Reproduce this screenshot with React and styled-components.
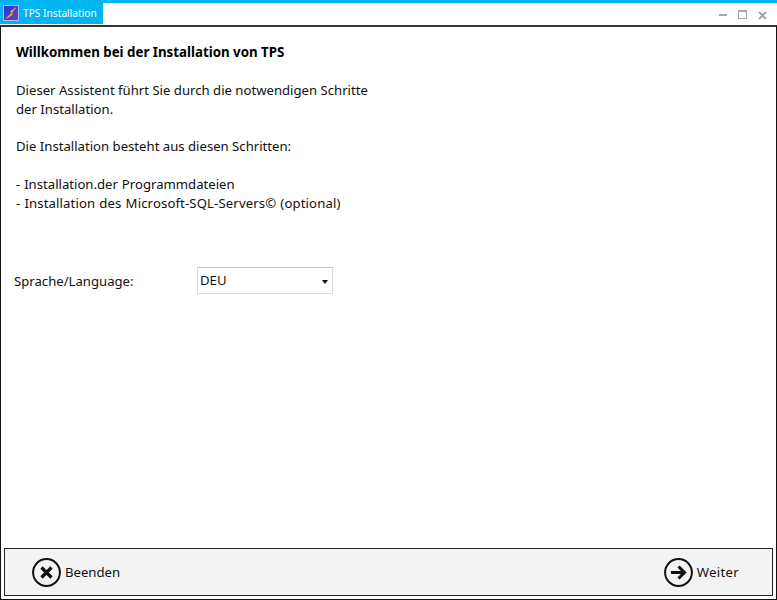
import React from "react";
import styled, { createGlobalStyle } from "styled-components";

const Global = createGlobalStyle`
  html, body { margin: 0; padding: 0; background: #fff; }
  #root { width: 777px; height: 600px; }
`;
const Window = styled.div`
  width: 777px; height: 600px; box-sizing: border-box; display: flex; flex-direction: column;
  font-family: "Noto Sans", "Open Sans", sans-serif; color: #111; background: #fff; overflow: hidden;
`;
const TitleBar = styled.header`
  height: 25px; flex: none; box-sizing: border-box; border-top: 3px solid #00b4f0; display: flex; justify-content: space-between;
`;
const TitleTab = styled.div`
  width: 103px; height: 21px; background: #00b4f0; color: #fff; font-size: 10.2px;
  display: flex; align-items: center; gap: 4px; padding-left: 3px; box-sizing: border-box; padding-bottom: 1px; white-space: nowrap;
`;
const WindowControls = styled.div`
  display: flex; align-items: center; gap: 10px; padding-right: 10px; height: 22px; padding-top: 2px; box-sizing: border-box;
`;
const Body = styled.main`
  flex: 1; min-height: 0; display: flex; flex-direction: column; box-sizing: border-box;
  border: 1px solid #111; border-top: 2px solid #333; padding: 0 3px 3px;
`;
const Content = styled.section`
  flex: 1; padding: 16px 0 0 12px; font-size: 13.15px; line-height: 19px;
`;
const Heading = styled.h1`
  margin: 0 0 19px; font-size: 13.3px; line-height: 19px; font-weight: 700; color: #000;
`;
const Paragraph = styled.p`
  margin: 0 0 18.4px; white-space: pre-line;
`;
const ListLine = styled.span`
  display: block; word-spacing: 0.5px; letter-spacing: ${(p) => p.$spread}px;
`;
const LanguageRow = styled.div`
  display: flex; align-items: center; margin: 54.3px 0 0 -2px;
`;
const LanguageLabel = styled.label`
  width: 183px; flex: none; padding-top: 2px;
`;
const Select = styled.div`
  width: 136px; height: 27px; box-sizing: border-box; border: 1px solid #dcdcdc; border-top-color: #c8c8c8; display: flex; align-items: center;
  justify-content: space-between; padding: 0 4px 0 2px; background: #fff;
`;
const Caret = styled.span`
  width: 0; height: 0; border-left: 3.5px solid transparent; border-right: 3.5px solid transparent; border-top: 4px solid #111; margin-top: 2px;
`;
const Footer = styled.footer`
  height: 48px; flex: none; box-sizing: border-box; border: 1px solid #222; background: #f3f3f3; display: flex; align-items: center; justify-content: space-between;
  padding: 0 33px 0 27px;
`;
const ActionButton = styled.button`
  all: unset; display: flex; align-items: center; gap: 4px; font-family: inherit; font-size: 13.15px; color: #111;
  letter-spacing: ${(p) => p.$spread || 0}px;
`;

const AppIcon = () => (
  <svg width="16" height="16" viewBox="0 0 16 16">
    <defs>
      <linearGradient id="appBg" x1="0" y1="0" x2="1" y2="1">
        <stop offset="0" stopColor="#2a2fd8" />
        <stop offset="1" stopColor="#5a4fc0" />
      </linearGradient>
    </defs>
    <rect x="0.5" y="0.5" width="15" height="15" fill="url(#appBg)" stroke="#b9b6ee" />
    <path d="M13 2.5 L7.5 6.5 L8.5 8 L3 13.5 L6 12 L9.5 9.5 L8.8 8 Z" fill="#f7c21a" stroke="#f59a10" strokeWidth="0.5" />
  </svg>
);
const Minimize = () => <svg width="9" height="10" viewBox="0 0 9 10"><rect x="0" y="4" width="8" height="2" fill="#a8a8a8" /></svg>;
const Maximize = () => <svg width="10" height="10" viewBox="0 0 10 10"><rect x="0.5" y="0.5" width="8" height="8" fill="none" stroke="#a8a8a8" /><rect x="0" y="0" width="9" height="2" fill="#a8a8a8" /></svg>;
const CloseX = () => <svg width="9" height="9" viewBox="0 0 9 9"><path d="M1 1 L8 8 M8 1 L1 8" stroke="#a0a0a0" strokeWidth="1.8" /></svg>;
const CircleIcon = ({ children }) => (
  <svg width="29" height="29" viewBox="0 0 29 29">
    <circle cx="14.5" cy="14.5" r="13.4" fill="none" stroke="#111" strokeWidth="2" />
    {children}
  </svg>
);

export default function App() {
  return (
    <Window>
      <Global />
      <TitleBar>
        <TitleTab><AppIcon />TPS Installation</TitleTab>
        <WindowControls><Minimize /><Maximize /><CloseX /></WindowControls>
      </TitleBar>
      <Body>
        <Content>
          <Heading>Willkommen bei der Installation von TPS</Heading>
          <Paragraph>{"Dieser Assistent führt Sie durch die notwendigen Schritte\nder Installation."}</Paragraph>
          <Paragraph>Die Installation besteht aus diesen Schritten:</Paragraph>
          <Paragraph as="div">
            <ListLine $spread={0}>- Installation.der Programmdateien</ListLine>
            <ListLine $spread={0.13}>- Installation des Microsoft-SQL-Servers© (optional)</ListLine>
          </Paragraph>
          <LanguageRow>
            <LanguageLabel>Sprache/Language:</LanguageLabel>
            <Select>DEU<Caret /></Select>
          </LanguageRow>
        </Content>
        <Footer>
          <ActionButton>
            <CircleIcon><path d="M9.5 9.5 L19.5 19.5 M19.5 9.5 L9.5 19.5" stroke="#111" strokeWidth="3.2" /></CircleIcon>
            Beenden
          </ActionButton>
          <ActionButton $spread={0.3}>
            <CircleIcon><path d="M7 14.5 H20 M14.5 8.5 L20.5 14.5 L14.5 20.5" stroke="#111" strokeWidth="3" fill="none" /></CircleIcon>
            Weiter
          </ActionButton>
        </Footer>
      </Body>
    </Window>
  );
}
